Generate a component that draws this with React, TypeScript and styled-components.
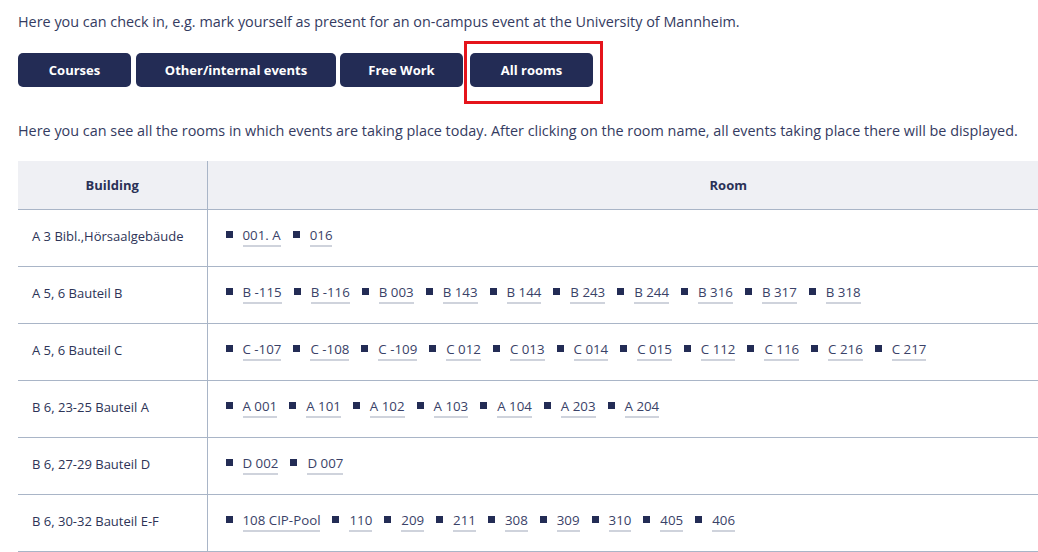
import React from "react";
import styled, { createGlobalStyle } from "styled-components";

const Global = createGlobalStyle`
  html, body { margin: 0; padding: 0; background: #fff; overflow: hidden; }
  body { font-family: "Open Sans", "Noto Sans", sans-serif; color: #2d3457; }
`;

const Page = styled.div`
  width: 1231px;
  padding: 11px 0 0 18px;
`;

const Intro = styled.p`
  margin: 0;
  font-size: 14.4px;
  line-height: 22px;
  color: #343b61;
`;

const TabBar = styled.div`
  display: flex;
  align-items: flex-start;
  gap: 4px;
  margin-top: 8px;
`;

const Tab = styled.button<{ $w: number; $ml?: number }>`
  height: 34px;
  margin-top: 12px;
  margin-left: ${(p) => p.$ml ?? 0}px;
  padding: 0;
  width: ${(p) => p.$w}px;
  border: none;
  border-radius: 5px;
  background: #232c55;
  color: #fff;
  font-family: "Open Sans", sans-serif;
  font-weight: 700;
  font-size: 13px;
  cursor: pointer;
`;

const Highlight = styled.div`
  display: flex;
  padding: 9px 7px 14px 3px;
  border: 3px solid #e5141b;
  margin-left: -3px;
  & > ${Tab} { margin-top: 0; }
`;

const Lead = styled(Intro)`
  margin-top: 16px;
`;

const Table = styled.table`
  margin-top: 19px;
  width: 100%;
  border-collapse: collapse;
  font-size: 13px;
`;

const BuildingCol = styled.col`
  width: 189px;
`;

const Th = styled.th`
  height: 48px;
  padding: 0;
  background: #eff0f4;
  font-weight: 700;
  font-size: 13px;
  color: #2a3156;
  text-align: center;
  border-bottom: 1px solid #a9b5c7;
  & + & { border-left: 1px solid #a9b5c7; }
`;

const Td = styled.td`
  height: 52px;
  border-bottom: 1px solid #a9b5c7;
  padding: 0 0 4px 14px;
  color: #2d3457;
  & + & { border-left: 1px solid #a9b5c7; padding-left: 18px; }
`;

const RoomList = styled.ul`
  list-style: none;
  margin: 0;
  padding: 0;
  display: flex;
  gap: 12px;
  align-items: center;
`;

const RoomItem = styled.li`
  display: flex;
  align-items: center;
  gap: 10px;
  &::before {
    content: "";
    width: 7px;
    height: 7px;
    background: #232c55;
    margin-top: -4px;
  }
`;

const RoomLink = styled.a`
  color: #3a4268;
  text-decoration: none;
  border-bottom: 2px solid #cfd3dc;
  padding-bottom: 1px;
  line-height: 18px;
  font-size: 13.3px;
`;

const rows: [string, string[]][] = [
  ["A 3 Bibl.,Hörsaalgebäude", ["001. A", "016"]],
  ["A 5, 6 Bauteil B", ["B -115", "B -116", "B 003", "B 143", "B 144", "B 243", "B 244", "B 316", "B 317", "B 318"]],
  ["A 5, 6 Bauteil C", ["C -107", "C -108", "C -109", "C 012", "C 013", "C 014", "C 015", "C 112", "C 116", "C 216", "C 217"]],
  ["B 6, 23-25 Bauteil A", ["A 001", "A 101", "A 102", "A 103", "A 104", "A 203", "A 204"]],
  ["B 6, 27-29 Bauteil D", ["D 002", "D 007"]],
  ["B 6, 30-32 Bauteil E-F", ["108 CIP-Pool", "110", "209", "211", "308", "309", "310", "405", "406"]],
];

export default function App() {
  return (
    <>
      <Global />
      <Page>
        <Intro>Here you can check in, e.g. mark yourself as present for an on-campus event at the University of Mannheim.</Intro>
        <TabBar>
          <Tab $w={113}>Courses</Tab>
          <Tab $w={200} $ml={1}>Other/internal events</Tab>
          <Tab $w={123}>Free Work</Tab>
          <Highlight>
            <Tab $w={123}>All rooms</Tab>
          </Highlight>
        </TabBar>
        <Lead>Here you can see all the rooms in which events are taking place today. After clicking on the room name, all events taking place there will be displayed.</Lead>
        <Table>
          <colgroup>
            <BuildingCol />
            <col />
          </colgroup>
          <thead>
            <tr>
              <Th>Building</Th>
              <Th>Room</Th>
            </tr>
          </thead>
          <tbody>
            {rows.map(([b, rooms]) => (
              <tr key={b}>
                <Td>{b}</Td>
                <Td>
                  <RoomList>
                    {rooms.map((r) => (
                      <RoomItem key={r}>
                        <RoomLink href="#">{r}</RoomLink>
                      </RoomItem>
                    ))}
                  </RoomList>
                </Td>
              </tr>
            ))}
          </tbody>
        </Table>
      </Page>
    </>
  );
}
